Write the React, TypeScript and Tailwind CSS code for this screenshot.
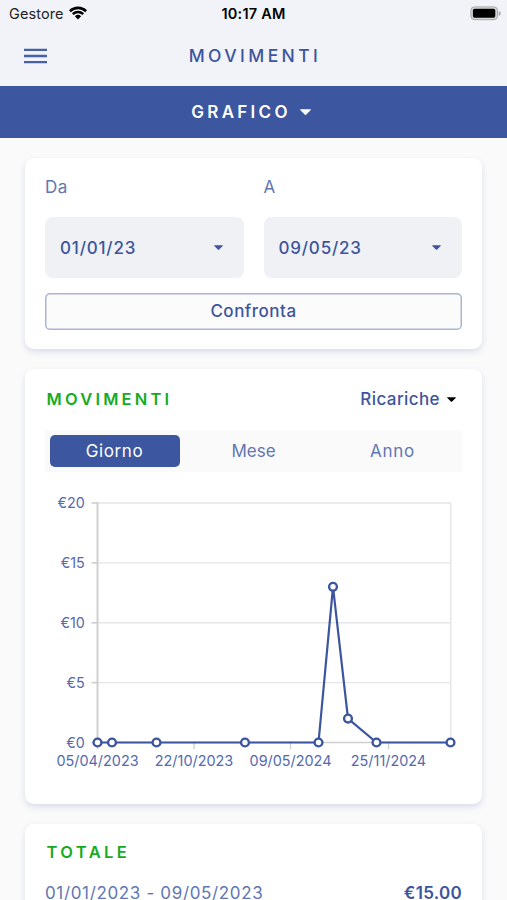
import React from "react";

const Caret: React.FC<{ className?: string }> = ({ className = "w-[9px]" }) => (
  <svg viewBox="0 0 10 6" className={className} fill="currentColor">
    <path d="M0.7 0.3h8.6c.5 0 .7.5.3.9L5.5 5.2c-.3.3-.7.3-1 0L.4 1.2C0 .8.2.3.7.3z" />
  </svg>
);

const StatusBar: React.FC = () => (
  <div className="relative flex h-[27px] items-center justify-between pl-[9px] pr-[5px] text-black">
    <div className="flex items-center gap-[5px]">
      <span className="relative top-[0.5px] text-[14.5px] leading-none tracking-[0.1px] text-[#222]">Gestore</span>
      <svg viewBox="0 0 18 14" className="-mt-px h-[14px] w-[18px]" fill="none" stroke="black">
        <path d="M0.9 5.2a11.6 11.6 0 0 1 16.2 0" strokeWidth="2.6" />
        <path d="M3.8 8.2a7.5 7.5 0 0 1 10.4 0" strokeWidth="2.5" />
        <path d="M9 13.4L5.9 10.2a4.6 4.6 0 0 1 6.2 0z" fill="black" stroke="none" />
      </svg>
    </div>
    <span className="absolute left-1/2 top-[5px] -translate-x-1/2 whitespace-nowrap text-[14.5px] font-semibold leading-[18px] tracking-[0.2px]">
      10:17 AM
    </span>
    <svg viewBox="0 0 32 15" className="h-[15px] w-[32px]">
      <rect x="0.9" y="0.9" width="26.6" height="12.8" rx="3.6" fill="#d6d7d9" stroke="#a6a7a9" />
      <path d="M28.8 5v4.8c1.3-.4 1.9-1.3 1.9-2.4s-.6-2-1.9-2.4z" fill="#a6a7a9" />
      <rect x="2.9" y="2.8" width="22.4" height="9" rx="1.7" fill="black" />
    </svg>
  </div>
);

const DateField: React.FC<{ label: string; value: string }> = ({ label, value }) => (
  <div className="flex-1">
    <div className="h-[20px] text-[17px] leading-[20px] tracking-[0.6px] text-[#6276b4]">{label}</div>
    <div className="mt-[20px] flex h-[61px] items-center justify-between rounded-[8px] bg-[#eff1f5] pl-[15px] pr-[21px] text-[#3c559e]">
      <span className="pt-[2px] text-[17px] font-medium tracking-[0.8px]">{value}</span>
      <Caret />
    </div>
  </div>
);

const yLabels = [20, 15, 10, 5, 0];

const xLabels = [
  { x: 52.5, text: "05/04/2023" },
  { x: 149, text: "22/10/2023" },
  { x: 245.5, text: "09/05/2024" },
  { x: 343.5, text: "25/11/2024" },
];

const points = [
  { x: 52.5, value: 0 },
  { x: 67, value: 0 },
  { x: 111.5, value: 0 },
  { x: 200, value: 0 },
  { x: 273.5, value: 0 },
  { x: 288, value: 13 },
  { x: 303, value: 2 },
  { x: 331.5, value: 0 },
  { x: 405.5, value: 0 },
];

// €0 sits at 260.5, each euro is 11.975px
const toY = (value: number) => 260.5 - value * 11.975;

const Chart: React.FC = () => (
  <svg viewBox="0 0 418 300" className="block h-[300px] w-[418px]">
    {yLabels.map((v) => (
      <g key={v}>
        <line x1="53" x2="406" y1={toY(v)} y2={toY(v)} stroke={v === 0 ? "#cfcfcf" : "#e5e5e7"} strokeWidth="1.4" />
        <line x1="46.5" x2="53" y1={toY(v)} y2={toY(v)} stroke="#cfcfcf" strokeWidth="1.6" />
        <text x="39.8" y={toY(v) + 5.2} textAnchor="end" fontSize="14.3" fill="#5469ae">
          {`€${v}`}
        </text>
      </g>
    ))}
    <line x1="405.8" x2="405.8" y1={toY(20)} y2={toY(0)} stroke="#e5e5e7" strokeWidth="1.4" />
    <line x1="52.5" x2="52.5" y1={toY(20) - 0.7} y2={toY(0)} stroke="#cfcfcf" strokeWidth="2" />
    {xLabels.map((l) => (
      <g key={l.text}>
        <line x1={l.x} x2={l.x} y1={toY(0)} y2={toY(0) + 6.5} stroke="#cfcfcf" strokeWidth="1.4" />
        <text x={l.x} y="283.8" textAnchor="middle" fontSize="14.4" fill="#5469ae">
          {l.text}
        </text>
      </g>
    ))}
    <polyline
      points={points.map((p) => `${p.x},${toY(p.value)}`).join(" ")}
      fill="none"
      stroke="#3c559e"
      strokeWidth="2.2"
      strokeLinejoin="round"
    />
    {points.map((p) => (
      <circle key={p.x} cx={p.x} cy={toY(p.value)} r="3.9" fill="white" stroke="#3c559e" strokeWidth="2.4" />
    ))}
  </svg>
);

const App: React.FC = () => {
  return (
    <div className="h-[900px] w-[507px] overflow-hidden bg-[#fafafa] font-['Inter',sans-serif]">
      <header className="h-[86px] bg-[#f1f3f8]">
        <StatusBar />
        <div className="grid h-[58px] grid-cols-[1fr_auto_1fr] items-center px-6 text-[#3c559e]">
          <svg viewBox="0 0 23 16" className="h-[16px] w-[23px]" stroke="#4860a6" strokeWidth="2.3">
            <path d="M0 1.8h23M0 8h23M0 14.2h23" />
          </svg>
          <h1 className="pl-[3px] text-[17.5px] font-medium leading-none tracking-[3.4px]">MOVIMENTI</h1>
        </div>
      </header>

      <div className="flex h-[52px] items-center justify-center gap-[9px] bg-[#3c569f] pr-[5px] pt-px text-white">
        <span className="text-[17px] font-semibold tracking-[3.3px]">GRAFICO</span>
        <Caret className="w-[11px]" />
      </div>

      <main className="flex flex-col gap-[20px] px-[25px] pt-[19.5px]">
        {/* Date range */}
        <section className="h-[191.5px] rounded-[9px] bg-white px-5 pt-[19.5px] shadow-[0_3px_6px_rgba(60,85,158,0.17)]">
          <div className="flex gap-5">
            <DateField label="Da" value="01/01/23" />
            <DateField label="A" value="09/05/23" />
          </div>
          <button className="mt-[14.5px] flex h-[37px] w-full items-center justify-center rounded-[5px] bg-[#fbfbfc] pt-px text-[17px] font-medium tracking-[0.5px] text-[#3c559e] shadow-[inset_0_0_0_1.5px_#a9b5d5]">
            Confronta
          </button>
        </section>

        {/* Movements chart */}
        <section className="h-[434.5px] rounded-[9px] bg-white px-5 pt-[20px] shadow-[0_3px_6px_rgba(60,85,158,0.17)]">
          <div className="flex h-[20px] items-center justify-between pl-[1.5px] pr-[6px]">
            <h2 className="text-[16.5px] font-semibold tracking-[3.2px] text-[#15ab22]">MOVIMENTI</h2>
            <div className="flex items-center gap-[7px] pt-px">
              <span className="text-[17px] font-medium tracking-[0.4px] text-[#3c559e]">Ricariche</span>
              <Caret className="w-[9px] text-black" />
            </div>
          </div>
          <div className="mt-[21px] grid h-[42px] grid-cols-3 items-center bg-[#fafafa] text-center text-[17px] text-[#6276b4]">
            <div className="mx-[4.5px] h-[32px] rounded-[5px] bg-[#3c569f] leading-[32px] tracking-[0.6px] text-white">Giorno</div>
            <div className="pt-px">Mese</div>
            <div className="pt-px tracking-[0.7px]">Anno</div>
          </div>
          <div className="mt-[10px]">
            <Chart />
          </div>
        </section>

        {/* Totals */}
        <section className="h-[200px] rounded-[9px] bg-white px-5 pt-[18.5px] shadow-[0_3px_6px_rgba(60,85,158,0.17)]">
          <h2 className="h-[20px] pl-[1.5px] text-[16.5px] font-semibold leading-[20px] tracking-[3.4px] text-[#15ab22]">TOTALE</h2>
          <div className="mt-[24px] flex items-center justify-between text-[17px] leading-[14px]">
            <span className="tracking-[0.65px] text-[#6276b4]">01/01/2023 - 09/05/2023</span>
            <span className="font-semibold tracking-[0.3px] text-[#3c559e]">€15.00</span>
          </div>
        </section>
      </main>
    </div>
  );
};

export default App;
